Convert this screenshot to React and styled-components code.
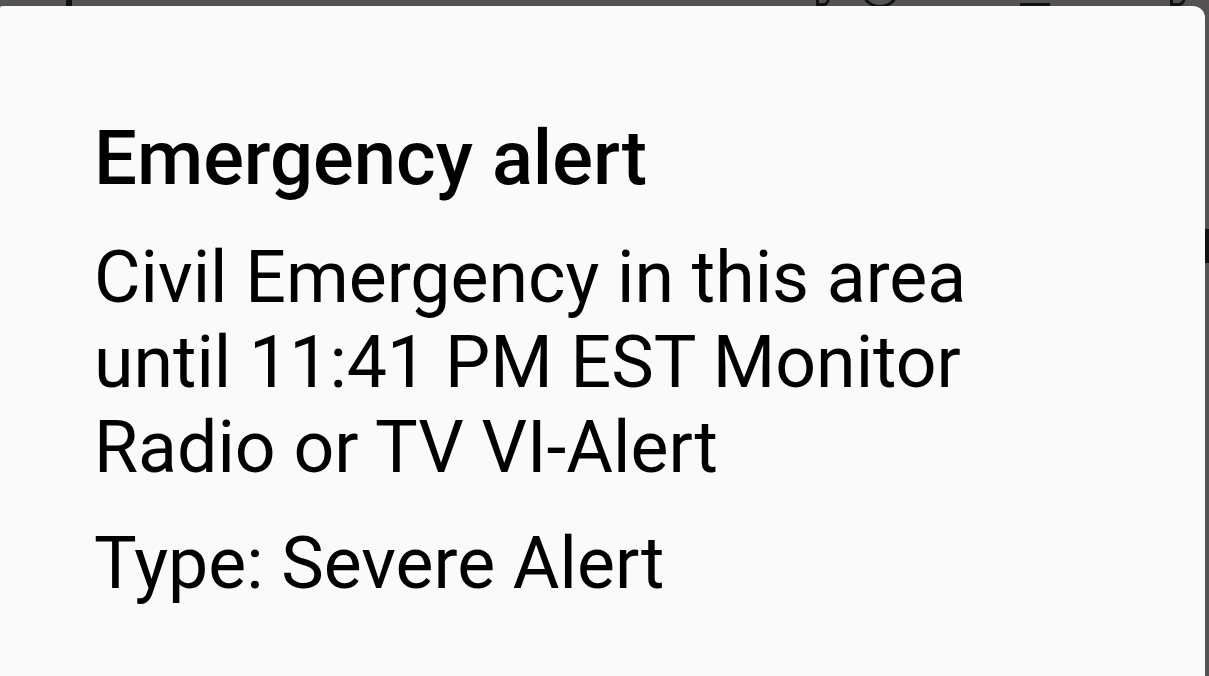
import React from "react";
import styled, { createGlobalStyle } from "styled-components";

const GlobalStyle = createGlobalStyle`
  html, body {
    margin: 0;
    padding: 0;
    background: #545253;
    overflow: hidden;
  }
  #root {
    height: 100vh;
  }
`;

const Screen = styled.div`
  position: relative;
  height: 100%;
  display: flex;
  flex-direction: column;
  padding: 6px 4px 0 0;
  box-sizing: border-box;
  background: #545253;
`;

// the app underneath the dim overlay, only its bottom edge peeks out
const Backdrop = styled.div`
  position: absolute;
  inset: 0;
  display: flex;
  align-items: flex-start;
  padding-left: 66px;
  pointer-events: none;
`;

const Stroke = styled.span`
  flex: none;
  margin-left: ${({ after }) => after || 0}px;
  width: ${({ w }) => w}px;
  height: ${({ h }) => h}px;
  margin-top: ${({ lift }) => -(lift || 0)}px;
  background: ${({ ring }) => (ring ? "transparent" : "#111")};
  border: ${({ ring }) => (ring ? "3px solid #111" : "none")};
  border-radius: ${({ round }) => round || 0};
  box-sizing: border-box;
`;

const EdgeMark = styled.span`
  position: absolute;
  right: 0;
  top: 229px;
  width: 6px;
  height: 34px;
  background: #111;
`;

const Dialog = styled.div`
  position: relative;
  z-index: 1;
  flex: 1;
  background: #fafafa;
  border-radius: 2px 12px 0 0;
  padding: 107px 40px 0 94px;
  display: flex;
  flex-direction: column;
  font-family: Roboto, "Noto Sans", sans-serif;
  color: #000;
`;

const Title = styled.h1`
  margin: 0;
  font-size: 76px;
  line-height: 90px;
  font-weight: 500;
`;

const Message = styled.p`
  margin: ${({ gap }) => gap}px 0 0;
  font-size: 71.6px;
  line-height: 85px;
  font-weight: 400;
  max-width: 900px;
`;

export default function App() {
  return (
    <>
      <GlobalStyle />
      <Screen>
        <Backdrop>
          <Stroke w={6} h={8} />
          <Stroke ring after={744} w={16} h={36} lift={30} round="0 0 50% 0" />
          <Stroke ring after={30} w={36} h={32} lift={24} round="50%" />
          <Stroke after={122} w={30} h={6} round="0" style={{ clipPath: "inset(3px 0 0 0)" }} />
          <Stroke ring after={120} w={18} h={36} lift={30} round="0 0 50% 0" />
          <EdgeMark />
        </Backdrop>
        <Dialog>
          <Title>Emergency alert</Title>
          <Message gap={32}>
            Civil Emergency in this area until 11:41 PM EST Monitor Radio or TV
            VI-Alert
          </Message>
          <Message gap={31}>Type: Severe Alert</Message>
        </Dialog>
      </Screen>
    </>
  );
}
